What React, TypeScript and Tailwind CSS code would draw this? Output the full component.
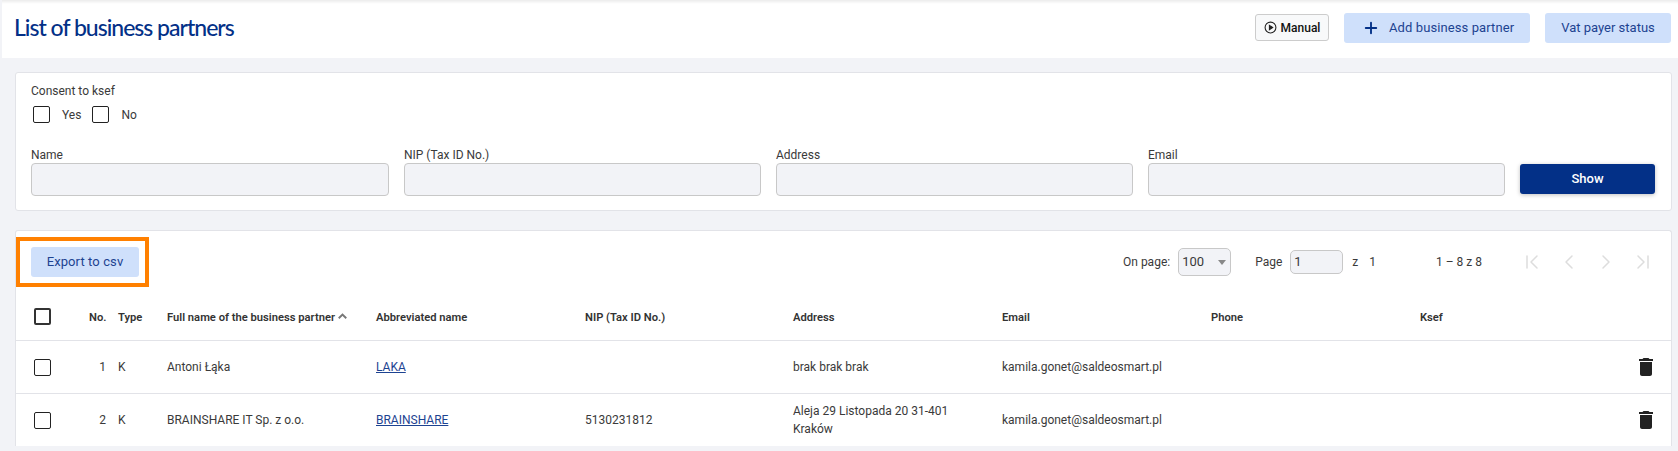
import { ChevronFirst, ChevronLast, ChevronLeft, ChevronRight, Plus } from "lucide-react";

const filters = [
  { label: "Name", width: "w-[358px]" },
  { label: "NIP (Tax ID No.)", width: "w-[357px]" },
  { label: "Address", width: "w-[357px]" },
  { label: "Email", width: "w-[357px]" },
];

const rowGrid =
  "grid grid-cols-[55px_17px_12px_49px_209px_209px_208px_209px_209px_209px_1fr_37px] items-center pl-[18px]";

const partners = [
  { no: 1, name: "Antoni Łąka", short: "LAKA", nip: "", address: ["brak brak brak"] },
  {
    no: 2,
    name: "BRAINSHARE IT Sp. z o.o.",
    short: "BRAINSHARE",
    nip: "5130231812",
    address: ["Aleja 29 Listopada 20 31-401", "Kraków"],
  },
];

const Checkbox = ({ heavy }: { heavy?: boolean }) => (
  <span
    className={`block h-[17px] w-[17px] rounded-[2px] bg-white ${
      heavy ? "-mt-[4px] border-2 border-[#333333]" : "border border-[#222222]"
    }`}
  />
);

const TrashIcon = () => (
  <svg viewBox="0 0 24 24" className="h-6 w-6 fill-[#222222]">
    <path d="M6 19c0 1.1.9 2 2 2h8c1.1 0 2-.9 2-2V7H6v12zM19 4h-3.5l-1-1h-5l-1 1H5v2h14V4z" />
  </svg>
);

export default function App() {
  return (
    <div className="h-[451px] w-[1678px] overflow-hidden bg-[#f2f3f7] pl-[2px] font-['Roboto',sans-serif] text-xs text-[#3a3a3a]">
      <header className="flex h-[58px] items-center justify-between bg-white pb-[3px] pl-[12px] pr-[7px] shadow-[inset_0_4px_3px_-2px_rgba(0,0,0,0.08)]">
        <h1 className="font-['Lato',sans-serif] text-[23px] font-medium tracking-[-1px] text-[#033087]">
          List of business partners
        </h1>
        <div className="flex items-center">
          <button className="flex h-[27px] w-[74px] items-center justify-center gap-[4px] rounded-[3px] border border-[#cccccc] bg-[#f8f9fa] text-xs font-medium text-[#111111]">
            <svg viewBox="0 0 24 24" className="h-[13px] w-[13px] fill-none stroke-[#222222] stroke-2">
              <circle cx="12" cy="12" r="10" />
              <path d="M10 8l6 4-6 4z" className="fill-[#222222]" />
            </svg>
            Manual
          </button>
          <button className="ml-[15px] flex h-[30px] w-[186px] items-center rounded-[3px] bg-[#cfe0fb] pl-[18px] text-[13px] tracking-[0.1px] text-[#1d4391]">
            <Plus className="h-[18px] w-[18px] text-[#033087]" strokeWidth={2.5} />
            <span className="ml-[9px]">Add business partner</span>
          </button>
          <button className="ml-[15px] h-[30px] w-[126px] rounded-[3px] bg-[#cfe0fb] text-[13px] text-[#1d4391]">
            Vat payer status
          </button>
        </div>
      </header>

      <section className="ml-[13px] mr-[6px] mt-[14px] h-[139px] rounded-[3px] border border-[#e2e3e8] bg-white pl-[15px] pt-[11px]">
        <div className="leading-[15px]">Consent to ksef</div>
        <div className="mt-[7px] flex h-[17px] items-center">
          <span className="ml-[2px]"><Checkbox /></span>
          <span className="ml-[12px]">Yes</span>
          <span className="ml-[11px]"><Checkbox /></span>
          <span className="ml-[12px]">No</span>
        </div>
        <div className="mt-[25px] flex items-end gap-[15px]">
          {filters.map((f) => (
            <label key={f.label} className={`block ${f.width}`}>
              <span className="block leading-[14px]">{f.label}</span>
              <span className="mt-[1px] block h-[33px] rounded-[4px] border border-[#c8c8c8] bg-[#f2f3f7]" />
            </label>
          ))}
          <button className="mb-[2px] h-[30px] w-[135px] rounded-[3px] bg-[#033087] pb-[1px] text-[13px] font-medium text-white shadow-[0_1px_4px_rgba(0,0,0,0.25)]">
            Show
          </button>
        </div>
      </section>

      <section className="ml-[13px] mr-[6px] mt-[19px] h-[216px] overflow-hidden rounded-t-[3px] border border-b-0 border-[#e2e3e8] bg-white">
        <div className="flex h-[62px] items-center pr-[16px]">
          <div className="flex h-[50px] w-[133px] items-center border-4 border-[#ff8000] pl-[11px]">
            <button className="h-[30px] w-[108px] rounded-[3px] bg-[#cfe0fb] text-[13px] tracking-[0.1px] text-[#1d4391]">
              Export to csv
            </button>
          </div>
          <div className="ml-auto flex items-center">
            <span>On page:</span>
            <div className="ml-[8px] flex h-[28px] w-[53px] items-center justify-between rounded-[5px] border border-[#c8c8c8] bg-[#f2f3f7] pl-[3px] pr-[4px] text-[13px]">
              100
              <span className="h-0 w-0 border-x-[4px] border-t-[5px] border-x-transparent border-t-[#888888]" />
            </div>
            <span className="ml-[24px]">Page</span>
            <div className="ml-[8px] flex h-[24px] w-[53px] items-center rounded-[5px] border border-[#c8c8c8] bg-[#f2f3f7] pl-[3px] text-[13px]">
              1
            </div>
            <span className="ml-[9px]">z</span>
            <span className="ml-[11px]">1</span>
            <span className="ml-[60px] w-[45px] whitespace-nowrap">1 – 8 z 8</span>
            <div className="ml-[39px] flex items-center gap-[13px] text-[#dddddd]">
              <ChevronFirst className="h-6 w-6" strokeWidth={1.5} />
              <ChevronLeft className="h-6 w-6" strokeWidth={1.5} />
              <ChevronRight className="h-6 w-6" strokeWidth={1.5} />
              <ChevronLast className="h-6 w-6" strokeWidth={1.5} />
            </div>
          </div>
        </div>

        <div className={`${rowGrid} h-[48px] border-b border-[#e2e3e8] pt-[3px] text-[11.2px] font-semibold text-[#333333]`}>
          <Checkbox heavy />
          <span className="col-span-2">No.</span>
          <span>Type</span>
          <span className="flex items-center">
            Full name of the business partner
            <svg viewBox="0 0 12 8" className="ml-[2px] mb-[4px] h-[6px] w-[11px] fill-none stroke-[#777777] stroke-[2.5]">
              <path d="M1 7l5-5 5 5" />
            </svg>
          </span>
          <span>Abbreviated name</span>
          <span>NIP (Tax ID No.)</span>
          <span>Address</span>
          <span>Email</span>
          <span>Phone</span>
          <span>Ksef</span>
        </div>

        {partners.map((p) => (
          <div key={p.no} className={`${rowGrid} h-[53px] border-b border-[#e2e3e8]`}>
            <Checkbox />
            <span className="text-right">{p.no}</span>
            <span />
            <span>K</span>
            <span>{p.name}</span>
            <span className="text-[#1d4391] underline">{p.short}</span>
            <span>{p.nip}</span>
            <span className="leading-[18px]">
              {p.address.map((line) => (
                <span key={line} className="block">{line}</span>
              ))}
            </span>
            <span>kamila.gonet@saldeosmart.pl</span>
            <span />
            <span />
            <TrashIcon />
          </div>
        ))}
      </section>
    </div>
  );
}
